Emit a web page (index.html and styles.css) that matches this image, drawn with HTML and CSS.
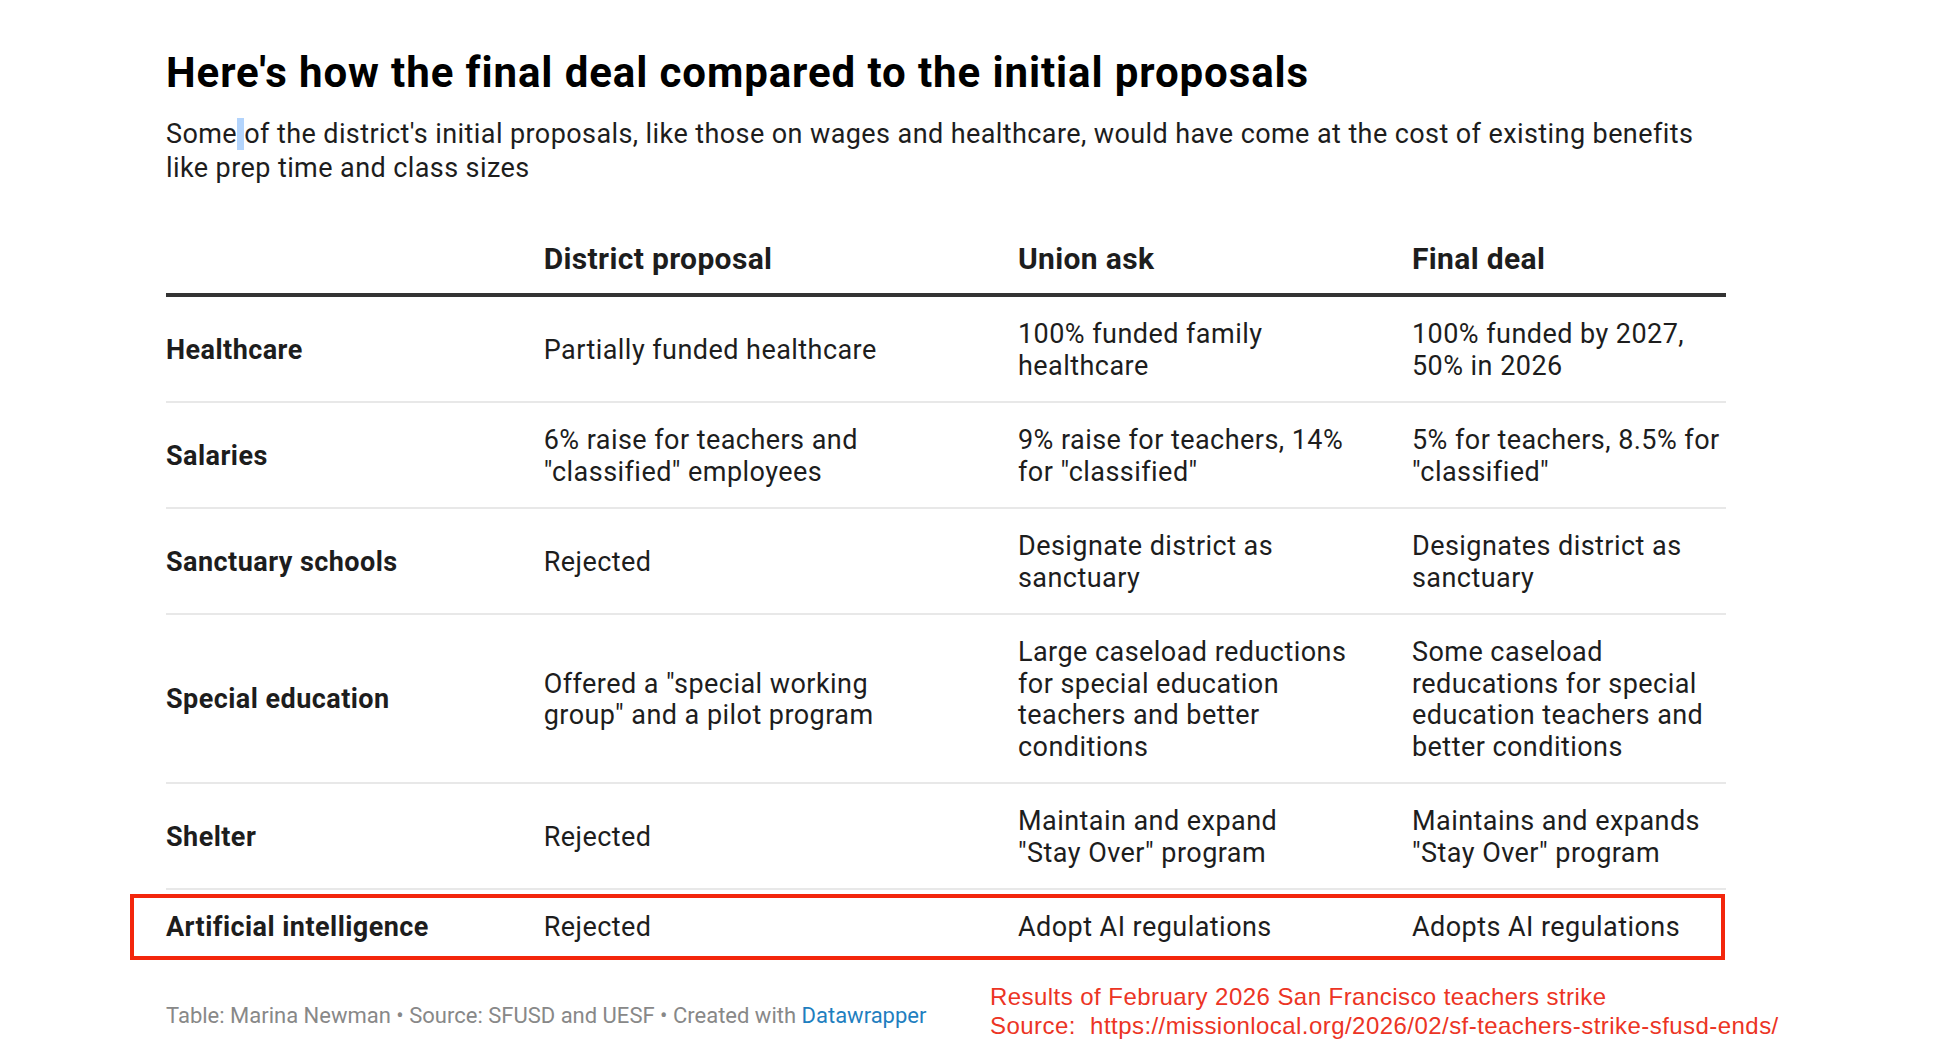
FILE: index.html
```html
<!DOCTYPE html>
<html lang="en">
<head>
<meta charset="utf-8">
<title>Here's how the final deal compared to the initial proposals</title>
<link rel="stylesheet" href="styles.css">
</head>
<body>
<main class="chart">
  <h1 class="title">Here's how the final deal compared to the initial proposals</h1>
  <p class="desc">Some<span class="sel"> </span>of the district's initial proposals, like those on wages and healthcare, would have come at the cost of existing benefits like prep time and class sizes</p>

  <table class="deal-table">
    <colgroup>
      <col class="c1"><col class="c2"><col class="c3"><col class="c4">
    </colgroup>
    <thead>
      <tr>
        <th class="col-label"></th>
        <th class="col-2">District proposal</th>
        <th class="col-3">Union ask</th>
        <th class="col-4">Final deal</th>
      </tr>
    </thead>
    <tbody>
      <tr>
        <td class="col-label">Healthcare</td>
        <td class="col-2">Partially funded healthcare</td>
        <td class="col-3">100% funded family healthcare</td>
        <td class="col-4">100% funded by 2027, 50% in 2026</td>
      </tr>
      <tr>
        <td class="col-label">Salaries</td>
        <td class="col-2">6% raise for teachers and "classified" employees</td>
        <td class="col-3">9% raise for teachers, 14% for "classified"</td>
        <td class="col-4">5% for teachers, 8.5% for "classified"</td>
      </tr>
      <tr>
        <td class="col-label">Sanctuary schools</td>
        <td class="col-2">Rejected</td>
        <td class="col-3">Designate district as sanctuary</td>
        <td class="col-4">Designates district as sanctuary</td>
      </tr>
      <tr>
        <td class="col-label">Special education</td>
        <td class="col-2">Offered a "special working group" and a pilot program</td>
        <td class="col-3">Large caseload reductions for special education teachers and better conditions</td>
        <td class="col-4">Some caseload reducations for special education teachers and better conditions</td>
      </tr>
      <tr>
        <td class="col-label">Shelter</td>
        <td class="col-2">Rejected</td>
        <td class="col-3">Maintain and expand "Stay Over" program</td>
        <td class="col-4">Maintains and expands "Stay Over" program</td>
      </tr>
      <tr class="highlight-row">
        <td class="col-label">Artificial intelligence<span class="red-box" aria-hidden="true"></span></td>
        <td class="col-2">Rejected</td>
        <td class="col-3">Adopt AI regulations</td>
        <td class="col-4">Adopts AI regulations</td>
      </tr>
    </tbody>
  </table>

  <footer class="footer">
    <p class="notes">Table: Marina Newman • Source: SFUSD and UESF • Created with <a class="dw-link" href="#">Datawrapper</a></p>
    <p class="annotation">Results of February 2026 San Francisco teachers strike<br>Source:&nbsp; https://missionlocal.org/2026/02/sf-teachers-strike-sfusd-ends/</p>
  </footer>
</main>
</body>
</html>
```
FILE: styles.css
```css
html, body {
  margin: 0;
  padding: 0;
  background: #ffffff;
}

body {
  font-family: Roboto, "Liberation Sans", Arial, sans-serif;
  color: #1d1d1d;
}

.chart {
  width: 1560px;
  padding: 49.5px 0 0 166px;
}

.title {
  margin: 0;
  font-size: 42px;
  line-height: 45.6px;
  font-weight: 700;
  color: #000000;
  letter-spacing: 0.9px;
}

.desc {
  margin: 23.2px 0 0;
  font-size: 27px;
  line-height: 33.4px;
  letter-spacing: 0.41px;
  font-weight: 400;
  color: #1d1d1d;
  max-width: 1545px;
}

.sel {
  background: #b3d4fc;
}

.deal-table {
  margin-top: 56px;
  width: 1560px;
  table-layout: fixed;
  border-collapse: collapse;
}

.c1 { width: 377.7px; }
.c2 { width: 474.3px; }
.c3 { width: 394px; }
.c4 { width: 314px; }

.deal-table th {
  text-align: left;
  font-size: 30px;
  line-height: 35px;
  letter-spacing: 0.35px;
  font-weight: 700;
  color: #1d1d1d;
  padding: 0 0 17px;
  border-bottom: 4px solid #333333;
  vertical-align: bottom;
}

.deal-table td {
  font-size: 27px;
  line-height: 31.5px;
  letter-spacing: 0.45px;
  padding: 22px 0 19px;
  vertical-align: middle;
  border-bottom: 2px solid #e8e8e8;
}

.deal-table tbody tr:last-child td {
  border-bottom: none;
}

.deal-table td.col-label {
  font-weight: 700;
}

.deal-table .col-2 { padding-right: 110px; }
.deal-table .col-3 { padding-right: 65.5px; }
.deal-table .col-4 { padding-right: 0; }

.highlight-row td.col-label {
  position: relative;
}

.red-box {
  position: absolute;
  left: -36px;
  top: 4px;
  bottom: 3px;
  width: 1595px;
  border: 4px solid #f3260c;
  box-sizing: border-box;
  pointer-events: none;
}

.footer {
  display: grid;
  grid-template-columns: 824px auto;
  align-items: start;
  margin-top: 19px;
}

.notes {
  margin: 21px 0 0;
  font-size: 22px;
  line-height: 25px;
  color: #888888;
}

.dw-link {
  color: #1f7fc0;
  text-decoration: none;
}

.annotation {
  margin: 0;
  font-family: "Liberation Sans", Arial, sans-serif;
  font-size: 24px;
  line-height: 29px;
  letter-spacing: 0.45px;
  color: #ec3424;
  white-space: nowrap;
}
```
